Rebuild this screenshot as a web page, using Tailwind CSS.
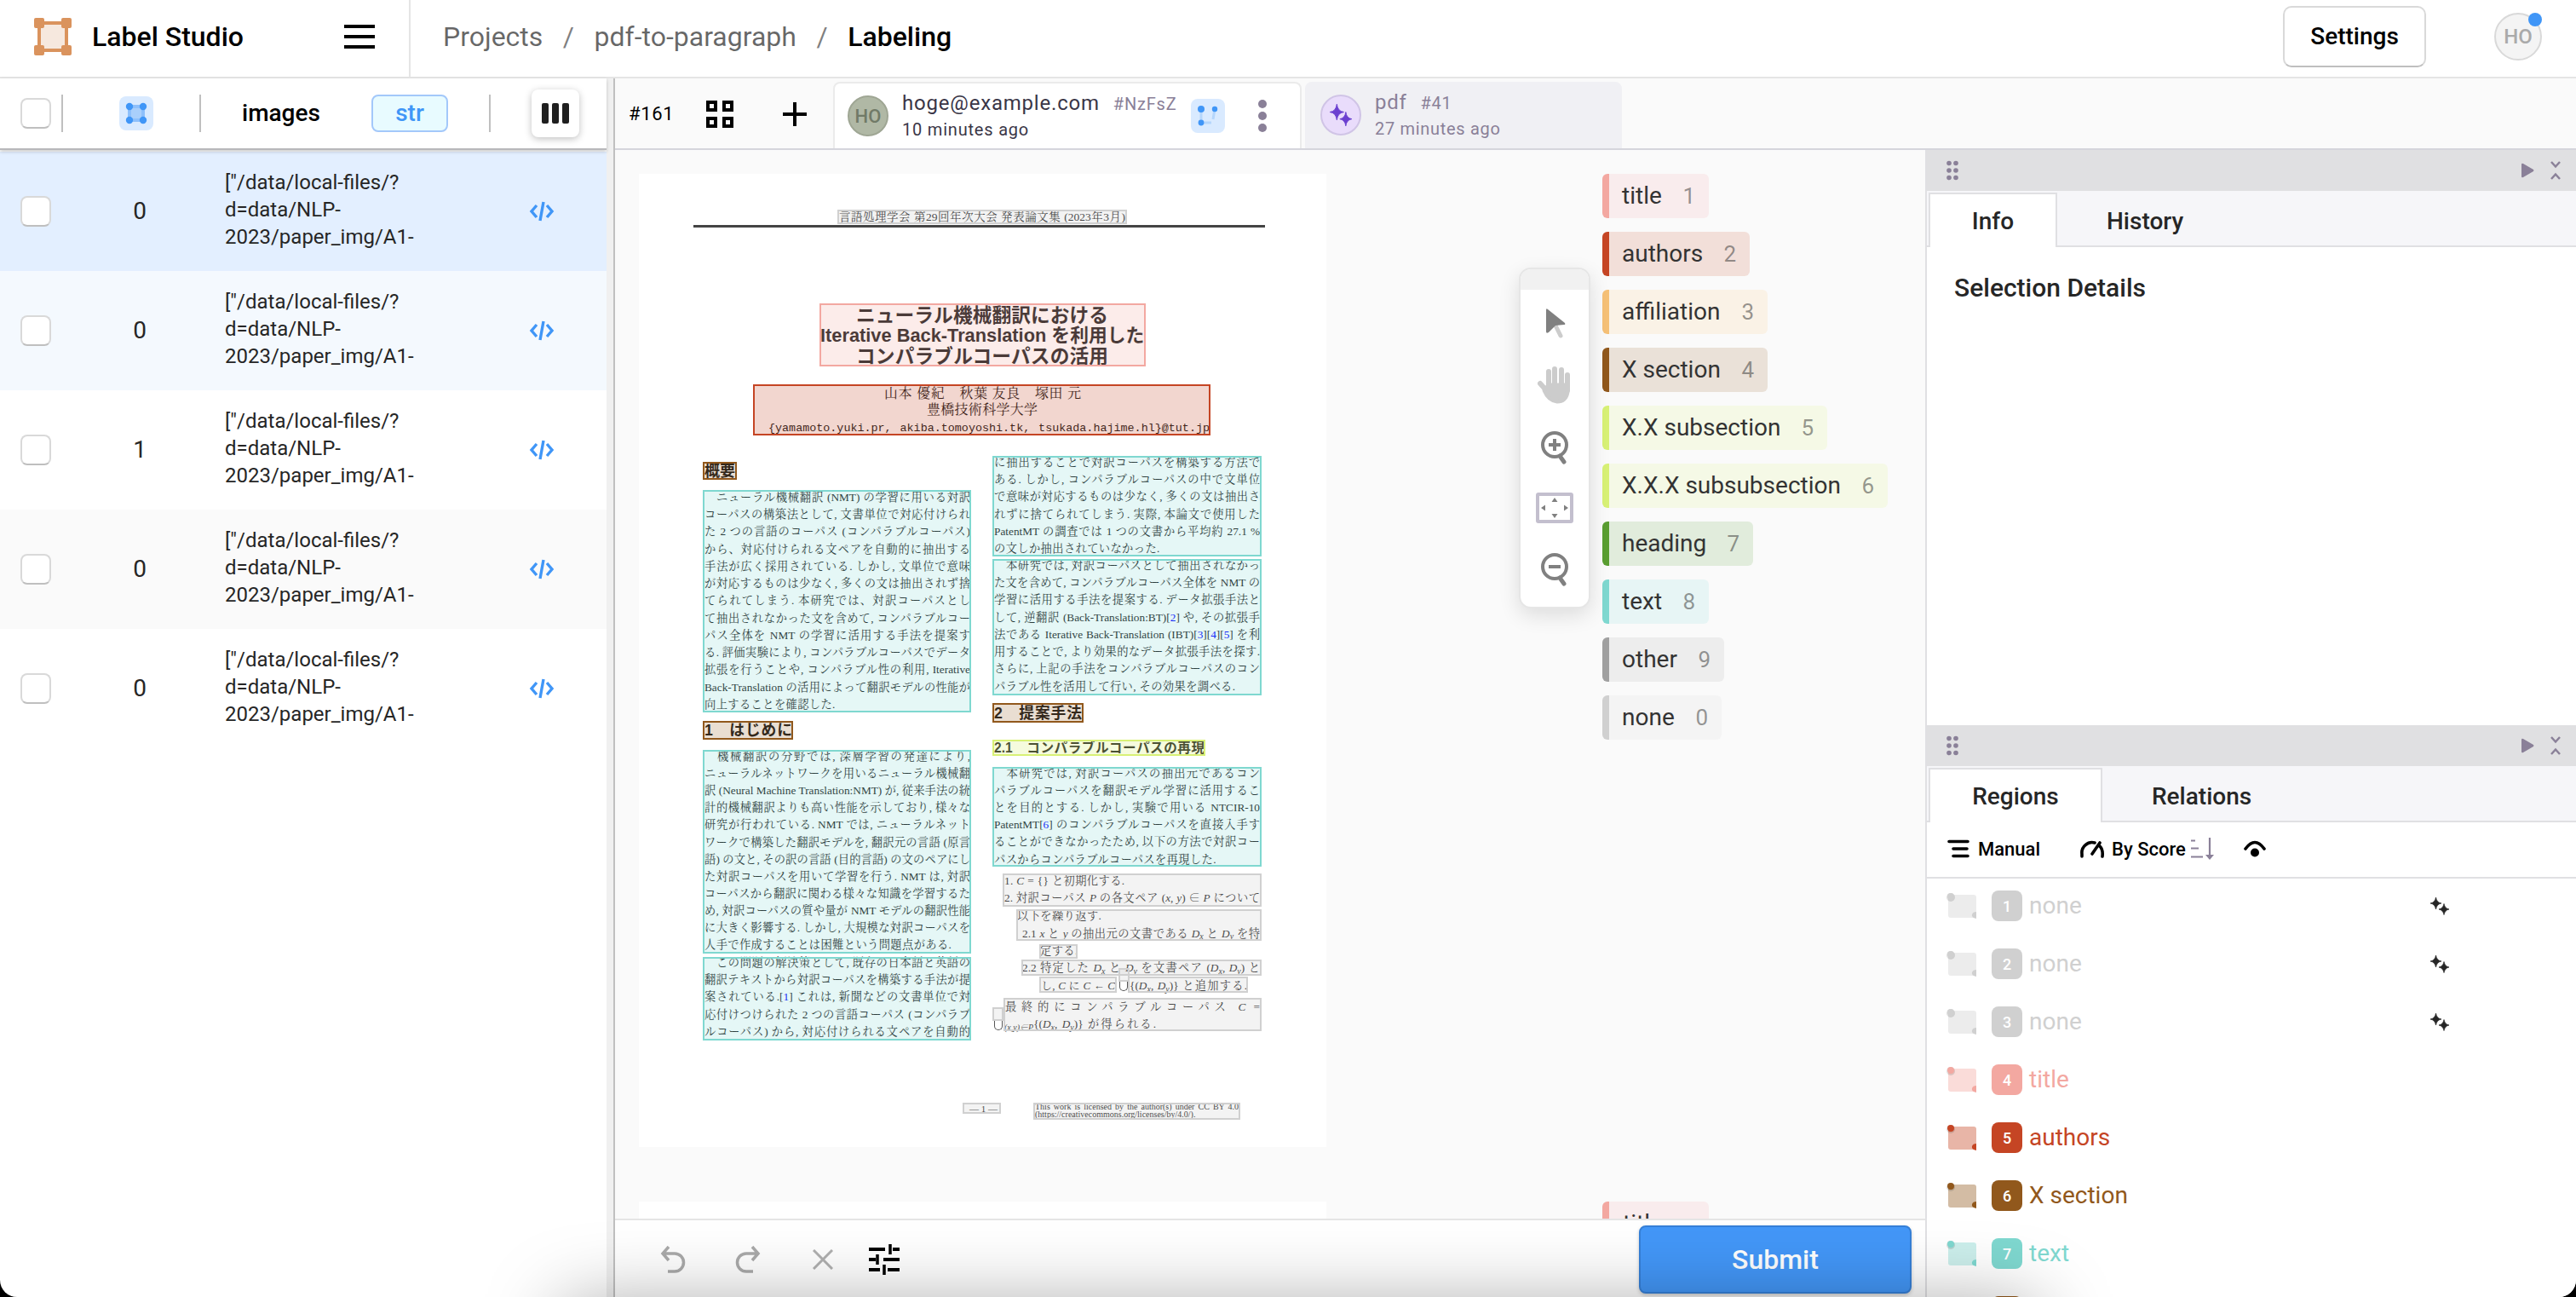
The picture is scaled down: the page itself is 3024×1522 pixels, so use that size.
<!DOCTYPE html>
<html lang="en">
<head>
<meta charset="utf-8">
<title>Label Studio</title>
<script src="https://cdn.jsdelivr.net/npm/@tailwindcss/browser@4"></script>
</head>
<body class="bg-black">
<div class="relative flex h-[1522px] w-[3024px] flex-col overflow-hidden rounded-b-[20px] bg-white font-[Roboto,'Noto_Sans_CJK_JP',sans-serif] text-[28px] text-[#262626]">

  <!-- Top bar -->
  <header class="flex h-[92px] shrink-0 items-center border-b-2 border-[#e5e5e5] pb-[4px] text-[32px] leading-none text-black/60">
    <div class="-mb-[4px] flex h-[90px] w-[482px] items-center border-r-2 border-[#e5e5e5] pb-[4px] pl-[40px] text-black">
      <svg class="size-[44px]" viewBox="0 0 44 44"><rect x="6" y="6" width="32" height="32" fill="#f6e8de" stroke="#da935d" stroke-width="4"/><g fill="#da935d"><rect width="12" height="12" rx="2"/><rect x="32" width="12" height="12" rx="2"/><rect y="32" width="12" height="12" rx="2"/><rect x="32" y="32" width="12" height="12" rx="2"/></g></svg>
      <span class="ml-[24px] font-medium">Label Studio</span>
      <svg class="ml-auto mr-[40px] h-[28px] w-[36px]" viewBox="0 0 36 28"><path d="M0 2h36M0 14h36M0 26h36" stroke="#000" stroke-width="4"/></svg>
    </div>
    <nav class="flex items-center pl-[38px]">
      <span>Projects</span><span class="mx-[23.500px] text-black/50">/</span><span>pdf-to-paragraph</span><span class="mx-[23.500px] text-black/50">/</span><span class="font-medium text-black">Labeling</span>
    </nav>
    <div class="ml-auto flex h-[72px] w-[168px] items-center justify-center rounded-[10px] border-2 border-[#d9d9d9] border-b-[#bfbfbf] text-[28px] font-medium text-black">Settings</div>
    <div class="relative ml-[80px] mr-[40px] flex size-[56px] items-center justify-center rounded-full border-2 border-[#d9d9d9] bg-[#f4f4f4] text-[24px] font-medium text-[#aaa]">HO<i class="absolute -right-[2px] -top-[2px] size-[16px] rounded-full bg-[#4096f7]"></i></div>
  </header>

  <div class="flex min-h-0 grow">
    <!-- Task list -->
    <aside class="flex w-[712px] shrink-0 flex-col">
      <div class="relative flex h-[84px] shrink-0 items-center border-b-2 border-[#b8b8bb] pl-[24px] shadow-[0_2px_4px_rgba(0,0,0,.2)]">
        <i class="size-[36px] rounded-[8px] border-2 border-[#d9d9d9] border-b-[#bfbfbf] bg-white"></i>
        <i class="ml-[12px] h-[44px] w-[2px] bg-[#bfbfbf]"></i>
        <svg class="ml-[66px] size-[40px]" viewBox="0 0 40 40"><rect width="40" height="40" rx="8" fill="#d9eaff"/><rect x="12" y="12" width="16" height="16" fill="#a9cffb" stroke="#8ec0fb" stroke-width="4"/><g fill="#4096f7"><circle cx="12" cy="12" r="4.2"/><circle cx="28" cy="12" r="4.2"/><circle cx="12" cy="28" r="4.2"/><circle cx="28" cy="28" r="4.2"/></g></svg>
        <i class="ml-[54px] h-[44px] w-[2px] bg-[#bfbfbf]"></i>
        <span class="ml-[48px] w-[152px] font-medium text-black">images</span>
        <span class="flex h-[44px] w-[90px] items-center justify-center rounded-[8px] border-2 border-[#a3c8fa] bg-[#e8fbff] font-medium text-[#4096f7]">str</span>
        <i class="ml-[48px] h-[44px] w-[2px] bg-[#bfbfbf]"></i>
        <span class="ml-[48px] flex h-[56px] w-[56px] items-center justify-center gap-[4px] rounded-[8px] bg-white shadow-[0_2px_8px_rgba(0,0,0,.25)]"><i class="h-[24px] w-[8px] rounded-[2px] bg-[#1f1f1f]"></i><i class="h-[24px] w-[8px] rounded-[2px] bg-[#1f1f1f]"></i><i class="h-[24px] w-[8px] rounded-[2px] bg-[#1f1f1f]"></i></span>
      </div>
      <div id="tasks" class="flex flex-col pt-[2px]"></div>
    </aside>
    <div class="w-[10px] shrink-0 border-r-2 border-[#c0c0c0] bg-[#f0f0f0]"></div>

    <!-- Editor -->
    <main class="flex min-w-0 grow flex-col">
      <div class="flex h-[84px] shrink-0 items-end border-b-2 border-[#d5d5dc] bg-[#fafafa] pl-[16px] text-black">
        <span class="mb-[26px] w-[91px] text-[22px] leading-[28px] tracking-[.7px]">#161</span>
        <svg class="mb-[24px] size-[32px]" viewBox="0 0 32 32" fill="none" stroke="#000" stroke-width="4"><path d="M2 2h9v9H2zM21 2h9v9h-9zM2 21h9v9H2zM21 21h9v9h-9z"/></svg>
        <svg class="mb-[26px] ml-[58px] size-[28px]" viewBox="0 0 28 28"><path d="M14 0v28M0 14h28" stroke="#000" stroke-width="4"/></svg>
        <div class="ml-[31px] flex h-[78px] w-[550px] items-center rounded-t-[8px] border-2 border-b-0 border-[#ebebeb] bg-white pl-[15px] tracking-[.8px] text-[#3a3647]">
          <span class="flex size-[48px] items-center justify-center rounded-full border-2 border-[#9fa694] bg-[#b0b8a5] text-[22px] font-medium tracking-normal text-[#717a67]">HO</span>
          <span class="ml-[16px] w-[339px]"><span class="flex items-baseline text-[24px] leading-[30px]">hoge@example.com<span class="ml-[16px] text-[20px] text-[#8a8098]">#NzFsZ</span></span><span class="block text-[20px] leading-[30px]">10 minutes ago</span></span>
          <svg class="size-[40px]" viewBox="0 0 40 40"><rect width="40" height="40" rx="8" fill="#d9eaff"/><path d="M12 12v16l12 0M28 12l-2 12" fill="none" stroke="#b5d6fc" stroke-width="3"/><g fill="#4096f7"><circle cx="12" cy="12" r="4"/><circle cx="28" cy="12" r="3.2"/><circle cx="12" cy="28" r="3.4"/></g></svg>
          <svg class="ml-[39px] h-[38px] w-[10px]" viewBox="0 0 10 38" fill="#8a8098"><circle cx="5" cy="5" r="5"/><circle cx="5" cy="19" r="5"/><circle cx="5" cy="33" r="5"/></svg>
        </div>
        <div class="ml-[4px] flex h-[78px] w-[372px] items-center rounded-t-[8px] bg-[#f0f0f4] pl-[18px] tracking-[.7px] text-[#8a8098]">
          <span class="flex size-[48px] items-center justify-center rounded-full border-2 border-[#d0c4e6] bg-[#e9dcfb]"><svg class="size-[28px]" viewBox="0 0 24 24" fill="#6b3fd0"><path d="M8 1Q8.800 8.200 15 9Q8.800 9.800 8 17Q7.200 9.800 1 9Q7.200 8.200 8 1ZM17 9Q17.800 15.200 23 16Q17.800 16.800 17 23Q16.200 16.800 11 16Q16.200 15.200 17 9Z" stroke="#6b3fd0" stroke-width=".8" stroke-linejoin="round"/></svg></span>
          <span class="ml-[16px]"><span class="flex items-baseline text-[24px] leading-[30px]">pdf<span class="ml-[16px] text-[20px]">#41</span></span><span class="block text-[20px] leading-[30px]">27 minutes ago</span></span>
        </div>
      </div>

      <div class="flex min-h-0 grow">
        <section class="flex w-[1538px] shrink-0 flex-col">
          <div class="relative flex min-h-0 grow items-start overflow-hidden bg-[#fafafa] pl-[28px] pt-[28px]">
            <div class="flex flex-col gap-[64px]">
              <div id="page" class="relative h-[1142px] w-[807px] bg-white font-['Liberation_Serif','Noto_Serif_CJK_JP','Noto_Sans_CJK_JP',serif] text-[#1a1a1a]">
                <i class="absolute left-[64px] top-[60px] h-[3px] w-[671px] bg-[#444]"></i>
              </div>
              <div class="h-[200px] w-[807px] bg-white"></div>
            </div>
            <div class="ml-[324px] flex flex-col">
              <div id="labels" class="flex h-[1206px] flex-col items-start gap-[16px]"></div>
              <div class="flex h-[52px] w-[125px] items-center rounded-[6px] border-l-8 border-[#f3a8a1] bg-[#f9eced] pl-[16px] text-[#333]">title</div>
            </div>
            <!-- Floating tool palette -->
            <div class="absolute left-[1061px] top-[138px] flex h-[400px] w-[84px] flex-col items-center rounded-[14px] border-2 border-[#e6e6e6] bg-white shadow-[0_8px_24px_rgba(0,0,0,.12)]">
              <i class="h-[24px] w-full shrink-0 rounded-t-[12px] bg-[#f1f1f1]"></i>
              <svg class="mt-[20px] h-[40px] w-[32px] shrink-0" viewBox="0 0 32 40"><path d="M16 20l7 14" stroke="#ccc" stroke-width="5" stroke-linecap="round"/><path d="M6 4q0-3 2-1L28 19q1 2-1 2l-10 1-8 8q-3 2-3-1z" fill="#808080"/></svg>
              <svg class="mt-[28px] h-[46px] w-[42px] shrink-0" viewBox="0 0 42 46" fill="none" stroke="#ccc" stroke-width="6" stroke-linecap="round"><path d="M14 8v18M21 5v20M29 6v20M36 12v18M4 22l8 9"/><path d="M14 24h22v8q-2 11-12 11Q14 42 9 30z" fill="#ccc" stroke-width="5" stroke-linejoin="round"/></svg>
              <svg class="mt-[31px] h-[42px] w-[36px] shrink-0" viewBox="0 0 36 42" fill="none" stroke="#808080" stroke-width="4"><circle cx="18" cy="17" r="14"/><path d="M11 17h14M18 10v14"/><path d="M24 30l5 7" stroke-width="5" stroke-linecap="round"/></svg>
              <svg class="mt-[31px] h-[36px] w-[44px] shrink-0" viewBox="0 0 44 36"><rect x="2" y="2" width="40" height="32" rx="1" fill="none" stroke="#c3bfce" stroke-width="4"/><path d="M22 6l3.500 5h-7zM22 30l3.500-5h-7zM6 18l5-3.500v7zM38 18l-5-3.500v7z" fill="#808080"/></svg>
              <svg class="mt-[34px] h-[42px] w-[36px] shrink-0" viewBox="0 0 36 42" fill="none" stroke="#808080" stroke-width="4"><circle cx="18" cy="17" r="14"/><path d="M11 17h14"/><path d="M24 30l5 7" stroke-width="5" stroke-linecap="round"/></svg>
            </div>
          </div>
          <!-- Bottom actions -->
          <div class="flex h-[92px] shrink-0 items-center border-t-2 border-[#e5e5e5] bg-white pl-[53px] pr-[16px]">
            <svg class="mt-[1px] h-[32px] w-[30px]" viewBox="0 0 30 32" fill="none" stroke="#aaa" stroke-width="3.500"><path d="M10 1L3 9l7 8M3 9h14a10 10 0 0 1 0 21H9"/></svg>
            <svg class="ml-[58px] mt-[1px] h-[32px] w-[30px]" viewBox="0 0 30 32" fill="none" stroke="#aaa" stroke-width="3.500"><path d="M20 1l7 8-7 8M27 9H13a10 10 0 0 0 0 21h8"/></svg>
            <svg class="ml-[61px] mt-[2px] size-[24px]" viewBox="0 0 24 24"><path d="M1 1l22 22M23 1L1 23" stroke="#b0b0b0" stroke-width="3"/></svg>
            <svg class="ml-[42px] mt-[2px] size-[36px]" viewBox="0 0 36 36" stroke="#000" stroke-width="4"><path d="M0 6h19M28 6h8M0 18h8M17 18h19M0 30h13M22 30h14" /><path d="M25 0v12M10 12v12M18 24v12" stroke-width="3.500"/></svg>
            <div class="ml-auto mt-[2px] flex h-[80px] w-[320px] items-center justify-center rounded-[8px] border-2 border-[#3680d8] bg-[#4397f8] text-[32px] font-medium text-white shadow-[0_2px_4px_rgba(0,0,0,.2)]">Submit</div>
          </div>
        </section>

        <!-- Side panels -->
        <aside class="flex min-w-0 grow flex-col border-l-2 border-[#e0e0e3] bg-white">
          <div class="flex h-[675px] shrink-0 flex-col">
            <div class="flex h-[48px] shrink-0 items-center bg-[#e0e0e2] pl-[22px] pr-[17px]">
              <svg class="h-[24px] w-[16px]" viewBox="0 0 16 24" fill="#8a8098"><circle cx="4" cy="3.500" r="2.800"/><circle cx="12" cy="3.500" r="2.800"/><circle cx="4" cy="12" r="2.800"/><circle cx="12" cy="12" r="2.800"/><circle cx="4" cy="20.500" r="2.800"/><circle cx="12" cy="20.500" r="2.800"/></svg>
              <svg class="ml-auto h-[18px] w-[16px]" viewBox="0 0 16 18"><path d="M1 2q0-2 2-1l12 7q1 1 0 2L3 17q-2 1-2-1z" fill="#8a8098"/></svg>
              <svg class="ml-[18px] h-[24px] w-[14px]" viewBox="0 0 14 24" fill="none" stroke="#8a8098" stroke-width="2.500"><path d="M2 2l5 5.500L12 2M2 22l5-5.500 5 5.500"/></svg>
            </div>
            <div class="flex h-[66px] shrink-0 items-end bg-[#f6f6f9] pl-[2px] font-medium shadow-[inset_0_-2px_0_#e0e0e3]">
              <span class="flex h-[64px] w-[151px] items-center justify-center border-2 border-b-0 border-[#e0e0e3] bg-white pt-[2px]">Info</span>
              <span class="flex h-[64px] items-center px-[58px] pt-[4px]">History</span>
            </div>
            <h2 class="pl-[32px] pt-[30px] text-[30px] leading-[36px] font-medium">Selection Details</h2>
          </div>
          <div class="flex h-[48px] shrink-0 items-center bg-[#e0e0e2] pl-[22px] pr-[17px]">
            <svg class="h-[24px] w-[16px]" viewBox="0 0 16 24" fill="#8a8098"><circle cx="4" cy="3.500" r="2.800"/><circle cx="12" cy="3.500" r="2.800"/><circle cx="4" cy="12" r="2.800"/><circle cx="12" cy="12" r="2.800"/><circle cx="4" cy="20.500" r="2.800"/><circle cx="12" cy="20.500" r="2.800"/></svg>
            <svg class="ml-auto h-[18px] w-[16px]" viewBox="0 0 16 18"><path d="M1 2q0-2 2-1l12 7q1 1 0 2L3 17q-2 1-2-1z" fill="#8a8098"/></svg>
            <svg class="ml-[18px] h-[24px] w-[14px]" viewBox="0 0 14 24" fill="none" stroke="#8a8098" stroke-width="2.500"><path d="M2 2l5 5.500L12 2M2 22l5-5.500 5 5.500"/></svg>
          </div>
          <div class="flex h-[66px] shrink-0 items-end bg-[#f6f6f9] pl-[2px] font-medium shadow-[inset_0_-2px_0_#e0e0e3]">
            <span class="flex h-[64px] w-[204px] items-center justify-center border-2 border-b-0 border-[#e0e0e3] bg-white pt-[2px]">Regions</span>
            <span class="flex h-[64px] items-center px-[58px] pt-[4px]">Relations</span>
          </div>
          <div class="flex h-[66px] shrink-0 items-center border-b-2 border-[#e0e0e3] pb-[2px] pl-[24px] text-[22px] font-medium text-black">
            <svg class="h-[22px] w-[26px]" viewBox="0 0 26 22" stroke="#000" stroke-width="3.600" stroke-linecap="round"><path d="M2 2.500h22M7 11h16M7 19.500h17"/></svg>
            <span class="ml-[10px]">Manual</span>
            <svg class="ml-[46px] h-[22px] w-[30px]" viewBox="0 0 30 22" fill="none" stroke="#000" stroke-width="3.600" stroke-linecap="round"><path d="M3 20v-3A12 12 0 0 1 18 4M27 20q1-8-3-12M15 17L24 4M3 20v-2"/></svg>
            <span class="ml-[8px]">By Score</span>
            <svg class="ml-[6px] h-[26px] w-[28px]" viewBox="0 0 28 26" fill="none" stroke="#8a8098" stroke-width="2.200"><path d="M0 3.500h5M0 12.500h9M0 22.500h14"/><path d="M22 0v21"/><path d="M17 20h10l-5 6z" fill="#8a8098" stroke="none"/></svg>
            <svg class="ml-[34px] h-[22px] w-[26px]" viewBox="0 0 26 22"><path d="M2 11q11-15 22 0" fill="none" stroke="#000" stroke-width="3.600" stroke-linecap="round"/><circle cx="13" cy="15.500" r="5" /></svg>
          </div>
          <div id="regions" class="-mt-[2px] flex min-h-0 grow flex-col overflow-hidden"></div>
        </aside>
      </div>
    </main>
  </div>
  <!-- Shade along the bottom edge of the window -->
  <div class="pointer-events-none absolute left-[660px] top-[1532px] h-[100px] w-[1730px] shadow-[0_0_90px_rgba(0,0,0,.36)]"></div>
</div>

<script>
const rowBg = ['bg-[#e3efff]', 'bg-[#f4f9fe]', 'bg-white', 'bg-[#fafafa]', 'bg-white'];
document.getElementById('tasks').innerHTML = [0, 0, 1, 0, 0].map((n, i) => `
  <div class="flex h-[140px] items-center ${rowBg[i]} pl-[24px]">
    <i class="size-[36px] rounded-[8px] border-2 border-[#d9d9d9] border-b-[#bfbfbf] bg-white"></i>
    <span class="ml-[74px] w-[60px] text-center">${n}</span>
    <span class="ml-[70px] w-[357px] pb-[4px] text-[24px] leading-[32px]">["/data/local-files/?<br>d=data/NLP-<br>2023/paper_img/A1-</span>
    <svg class="h-[24px] w-[30px]" viewBox="0 0 30 24" fill="none" stroke="#4096f7" stroke-width="3.400"><path d="M9 5L3 12l6 7M21 5l6 7-6 7M17 1l-4 22"/></svg>
  </div>`).join('');

const labels = [
  ['title', 'border-[#f3a8a1] bg-[#f9eced] w-[125px]'], ['authors', 'border-[#c54524] bg-[#f2dfd9] w-[173px]'],
  ['affiliation', 'border-[#f6c177] bg-[#faf2e6] w-[194px]'], ['X section', 'border-[#91581c] bg-[#eae1d8] w-[194px]'],
  ['X.X subsection', 'border-[#d8f176] bg-[#f5f9e6] w-[264px]'], ['X.X.X subsubsection', 'border-[#d8f176] bg-[#f5f9e6] w-[335px]'],
  ['heading', 'border-[#5a9e31] bg-[#e1ecdc] w-[177px]'], ['text', 'border-[#7fd8d0] bg-[#e7f5f5] w-[125px]'],
  ['other', 'border-[#a0a0a0] bg-[#ededed] w-[143px]'], ['none', 'border-[#d0d0d0] bg-[#f4f4f4] w-[140px]']];
document.getElementById('labels').innerHTML = labels.map(([t, c], i) =>
  `<div class="flex h-[52px] items-center justify-between rounded-[6px] border-l-8 ${c} pl-[15px] pr-[16px] text-[#333]">${t}<span class="text-[26px] text-[#333]/50">${(i + 1) % 10}</span></div>`).join('');

const regions = [['none', 'text-[#d0d0d0]', 1], ['none', 'text-[#d0d0d0]', 1], ['none', 'text-[#d0d0d0]', 1], ['title', 'text-[#f3a8a1]'],
  ['authors', 'text-[#c54524]'], ['X section', 'text-[#91581c]'], ['text', 'text-[#7fd8d0]'], ['', 'text-[#91581c]']];
document.getElementById('regions').innerHTML = regions.map(([t, c, auto], i) => `
  <div class="flex h-[68px] shrink-0 items-center pl-[22px] ${c}">
    <svg class="h-[36px] w-[38px]" viewBox="0 0 38 36"><rect x="3" y="5" width="33" height="27" rx="3" fill="currentColor" opacity=".4"/><circle cx="6" cy="8" r="5" fill="#000" opacity=".12"/><circle cx="6" cy="7" r="4" fill="currentColor"/><path d="M36 33q-6-1-5-5 1-3 5-3z" fill="currentColor"/></svg>
    <span class="ml-[16px] flex size-[36px] items-center justify-center rounded-[8px] bg-current"><b class="text-[18px] font-medium text-white">${t ? i + 1 : ''}</b></span>
    <span class="ml-[8px] w-[470px]">${t}</span>
    ${auto ? '<svg class="size-[24px] text-[#262626]" viewBox="0 0 24 24" fill="currentColor" stroke="currentColor" stroke-width=".7" stroke-linejoin="round"><path d="M7.500 2Q8.500 8 14 9Q8.500 10 7.500 16Q6.500 10 1 9Q6.500 8 7.500 2ZM17 9.500Q18 15 23 16Q18 17 17 22.500Q16 17 11 16Q16 15 17 9.500Z"/></svg>' : ''}
  </div>`).join('');

/* Document page: annotated boxes and the text lines they cover. Coordinates are window pixels. */
const OX = 750, OY = 204;
const kinds = {
  t: 'border-[#7fd8d0] bg-[#7fd8d0]/20', s: 'border-[#91581c] bg-[#91581c]/20', y: 'border-[#d8f176] bg-[#d8f176]/25',
  h: 'border-[#f3a8a1] bg-[#f3a8a1]/22', a: 'border-[#c54524] bg-[#c54524]/22', n: 'border-[#d0d0d0] bg-[#d0d0d0]/25'};
const boxes = [[983,246,340,17,'n'],[962,356,383,74,'h'],[884,451,537,60,'a'],[825,542,40,21,'s'],[825,575,315,261,'t'],[825,846,106,22,'s'],
  [825,880,315,239,'t'],[825,1123,315,98,'t'],[1165,535,316,118,'t'],[1165,656,316,160,'t'],[1165,825,107,23,'s'],[1165,868,250,19,'y'],
  [1165,900,316,117,'t'],[1177,1025,304,39,'n'],[1193,1067,288,37,'n'],[1220,1108,45,17,'n'],[1199,1126,282,19,'n'],[1220,1146,91,19,'n'],
  [1324,1146,141,19,'n'],[1313,1136,13,16,'n'],[1178,1171,303,39,'n'],[1165,1182,13,16,'n'],[1130,1294,45,13,'n'],[1213,1294,243,20,'n']];
const L = n => `<span class="text-[#00f]">${n}</span>`;
const sub = s => `<sub class="text-[10px] leading-none">${s}</sub>`;
const blocks = [
  [985,254.500,336,16,'text-[13.5px]',['言語処理学会 第29回年次大会 発表論文集 (2023年3月)']],
  [1005,370,296,24.500,'B text-[22.7px]',['ニューラル機械翻訳における']],[963,394.500,380,24.500,'B text-[21.8px]',['Iterative Back-Translation を利用した']],[1005,418.500,296,24.500,'B text-[22.7px]',['コンパラブルコーパスの活用']],
  [1038,462,231,18,'text-[15.8px]',['山本 優紀　秋葉 友良　塚田 元']],[1088,481,130,18,'text-[16px]',['豊橋技術科学大学']],
  [902,503,518,18,'M text-[13.4px]',['{yamamoto.yuki.pr, akiba.tomoyoshi.tk, tsukada.hajime.hl}@tut.jp']],
  [827,553,36,20,'B text-[18px]',['概要']],[827,857,103,20,'B text-[17.8px]',['1　はじめに']],[1167,837,103,20,'B text-[17.8px]',['2　提案手法']],[1167,877.500,247,18,'B text-[15.6px]',['2.1　コンパラブルコーパスの再現']],
  [827,584,312,20.250,'text-[13.3px]',['　ニューラル機械翻訳 (NMT) の学習に用いる対訳','コーパスの構築法として, 文書単位で対応付けられ','た 2 つの言語のコーパス (コンパラブルコーパス)','から、対応付けられる文ペアを自動的に抽出する','手法が広く採用されている. しかし, 文単位で意味','が対応するものは少なく, 多くの文は抽出されず捨','てられてしまう. 本研究では、対訳コーパスとし','て抽出されなかった文を含めて, コンパラブルコー','パス全体を NMT の学習に活用する手法を提案す','る. 評価実験により, コンパラブルコーパスでデータ','拡張を行うことや, コンパラブル性の利用, Iterative','Back-Translation の活用によって翻訳モデルの性能が','|向上することを確認した.']],
  [827,888,312,20.150,'text-[13.3px]',['　機械翻訳の分野では, 深層学習の発達により,','ニューラルネットワークを用いるニューラル機械翻','訳 (Neural Machine Translation:NMT) が, 従来手法の統','計的機械翻訳よりも高い性能を示しており, 様々な','研究が行われている. NMT では, ニューラルネット','ワークで構築した翻訳モデルを, 翻訳元の言語 (原言','語) の文と, その訳の言語 (目的言語) の文のペアにし','た対訳コーパスを用いて学習を行う. NMT は, 対訳','コーパスから翻訳に関わる様々な知識を学習するた','め, 対訳コーパスの質や量が NMT モデルの翻訳性能','に大きく影響する. しかし, 大規模な対訳コーパスを','|人手で作成することは困難という問題点がある.']],
  [827,1130,312,20.250,'text-[13.3px]',['　この問題の解決策として, 既存の日本語と英語の','翻訳テキストから対訳コーパスを構築する手法が提',`案されている.[${L(1)}] これは, 新聞などの文書単位で対`,'応付けつけられた 2 つの言語コーパス (コンパラブ','ルコーパス) から, 対応付けられる文ペアを自動的']],
  [1167,543,312,20.250,'text-[13.3px]',['に抽出することで対訳コーパスを構築する方法で','ある. しかし, コンパラブルコーパスの中で文単位','で意味が対応するものは少なく, 多くの文は抽出さ','れずに捨てられてしまう. 実際, 本論文で使用した','PatentMT の調査では 1 つの文書から平均約 27.1 %','|の文しか抽出されていなかった.']],
  [1167,664,312,20.270,'text-[13.3px]',['　本研究では, 対訳コーパスとして抽出されなかっ','た文を含めて, コンパラブルコーパス全体を NMT の','学習に活用する手法を提案する. データ拡張手法と',`して, 逆翻訳 (Back-Translation:BT)[${L(2)}] や, その拡張手`,`法である Iterative Back-Translation (IBT)[${L(3)}][${L(4)}][${L(5)}] を利`,'用することで, より効果的なデータ拡張手法を探す.','さらに, 上記の手法をコンパラブルコーパスのコン','|パラブル性を活用して行い, その効果を調べる.']],
  [1167,908,312,20.150,'text-[13.3px]',['　本研究では, 対訳コーパスの抽出元であるコン','パラブルコーパスを翻訳モデル学習に活用するこ','とを目的とする. しかし, 実験で用いる NTCIR-10',`PatentMT[${L(6)}] のコンパラブルコーパスを直接入手す`,'ることができなかったため, 以下の方法で対訳コー','|パスからコンパラブルコーパスを再現した.']],
  [1179,1034,300,20.300,'text-[13.3px]',['|1. <i>C</i> = {} と初期化する.','2. 対訳コーパス <i>P</i> の各文ペア (<i>x</i>, <i>y</i>) ∈ <i>P</i> について']],
  [1194,1075,200,20,'text-[13.3px]',['|以下を繰り返す.']],
  [1200,1095.500,279,20,'text-[13.3px]',[`2.1 <i>x</i> と <i>y</i> の抽出元の文書である <i>D${sub('x')}</i> と <i>D${sub('y')}</i> を特`]],
  [1221,1115.500,45,18,'text-[13.3px]',['|定する.']],
  [1200,1136,279,20,'text-[13.3px]',[`2.2 特定した <i>D${sub('x')}</i> と <i>D${sub('y')}</i> を文書ペア (<i>D${sub('x')}</i>, <i>D${sub('y')}</i>) と`]],
  [1222,1157,87,20,'text-[13px]',['し, <i>C</i> に <i>C</i> ← <i>C</i>']],
  [1326,1157,138,20,'text-[13.3px]',[`{(<i>D${sub('x')}</i>, <i>D${sub('y')}</i>)} と追加する.`]],
  [1180,1181.500,299,20,'text-[13.3px]',['最終的にコンパラブルコーパス <i>C</i> =']],
  [1179,1202,178,20,'text-[13.3px]',[`<i>${sub('(x,y)∈P')}</i>{(<i>D${sub('x')}</i>, <i>D${sub('y')}</i>)} が得られる.`]],
  [1138,1301,30,12,'text-[11px]',['— 1 —']],
  [1215,1298.500,239,10,'text-[10px]',['This work is licensed by the author(s) under CC BY 4.0']],[1215,1308,201,10,'text-[10px]',['(https://creativecommons.org/licenses/by/4.0/).']]];
const fam = {B: "font-['Liberation_Sans','Noto_Sans_CJK_JP',sans-serif] font-bold text-[#1c1c1c]", M: "font-['Liberation_Mono',monospace]"};
let html = '';
for (const [x, cy, w, p, cls, lines] of blocks) {
  const c = cls.replace(/^[BM]/, m => fam[m]);
  html += `<div class="absolute whitespace-nowrap ${c}" style="left:${x - OX}px;top:${cy - p / 2 - OY}px;width:${w}px">` + lines.map(t =>
    t[0] === '|' ? `<p class="whitespace-pre tracking-[.35px]" style="height:${p}px;line-height:${p}px">${t.slice(1)}</p>`
                 : `<p class="[text-align-last:justify]" style="height:${p}px;line-height:${p}px">${t}</p>`).join('') + '</div>';
}
for (const [x, y, w, h, k] of boxes)
  html += `<i class="absolute border-2 ${kinds[k]}" style="left:${x - OX}px;top:${y - OY}px;width:${w}px;height:${h}px"></i>`;
for (const [x, y] of [[1314, 1152], [1167, 1198]])
  html += `<i class="absolute h-[11px] w-[10px] rounded-b-[5px] border-[1.5px] border-t-0 border-[#555]" style="left:${x - OX}px;top:${y - OY}px"></i>`;
document.getElementById('page').insertAdjacentHTML('beforeend', html);
</script>
</body>
</html>
